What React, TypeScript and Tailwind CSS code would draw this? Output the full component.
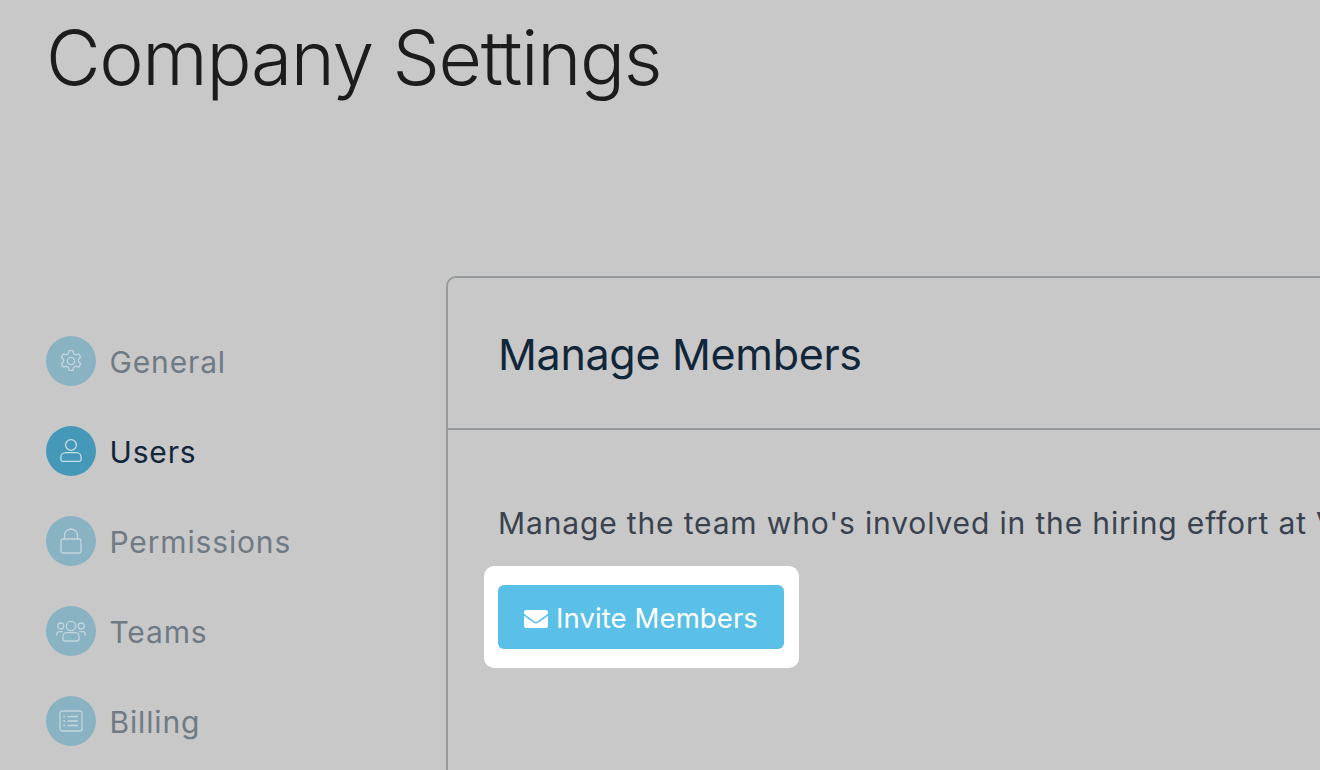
import { FaEnvelope } from "react-icons/fa";

const font = { fontFamily: "Inter, 'Liberation Sans', sans-serif" };

function GearIcon() {
  return (
    <svg width="24" height="24" viewBox="0 0 24 24" fill="none" stroke="currentColor" strokeWidth="1.3" strokeLinejoin="round">
      <path d="M10 1.6h4l.6 3 2.2 1.2 2.9-1 2 3.4-2.3 2v2.6l2.3 2-2 3.4-2.9-1-2.2 1.2-.6 3h-4l-.6-3-2.2-1.2-2.9 1-2-3.4 2.3-2v-2.6l-2.3-2 2-3.4 2.9 1 2.2-1.2z" />
      <circle cx="12" cy="12" r="3.6" />
    </svg>
  );
}

function UserIcon() {
  return (
    <svg width="24" height="26" viewBox="0 0 24 26" fill="none" stroke="currentColor" strokeWidth="1.3">
      <circle cx="12" cy="7" r="5.4" />
      <path d="M6.5 14.6h11a4.6 4.6 0 0 1 4.6 4.6v2.4c0 1-.8 1.8-1.8 1.8H3.7c-1 0-1.8-.8-1.8-1.8v-2.4a4.6 4.6 0 0 1 4.6-4.6z" />
    </svg>
  );
}

function LockIcon() {
  return (
    <svg width="22" height="26" viewBox="0 0 22 26" fill="none" stroke="currentColor" strokeWidth="1.3">
      <rect x="1" y="11" width="20" height="14" rx="2" />
      <path d="M4.5 11V7.5a6.5 6.5 0 0 1 13 0V11" />
    </svg>
  );
}

function TeamIcon() {
  return (
    <svg width="30" height="22" viewBox="0 0 30 22" fill="none" stroke="currentColor" strokeWidth="1.3">
      <circle cx="15" cy="6" r="4.6" />
      <circle cx="4.8" cy="6" r="3" />
      <circle cx="25.2" cy="6" r="3" />
      <path d="M10.6 12.6h8.8a3.6 3.6 0 0 1 3.6 3.6v2.6c0 1.2-1 2.2-2.2 2.2H9.2c-1.2 0-2.2-1-2.2-2.2v-2.6a3.6 3.6 0 0 1 3.6-3.6z" />
      <path d="M.8 15.5v-1a2.8 2.8 0 0 1 2.8-2.8h3.2M29.2 15.5v-1a2.8 2.8 0 0 0-2.8-2.8h-3.2" />
    </svg>
  );
}

function ListIcon() {
  return (
    <svg width="24" height="22" viewBox="0 0 24 22" fill="none" stroke="currentColor" strokeWidth="1.3">
      <rect x="1" y="1" width="22" height="20" rx="2" />
      <path d="M8.5 6.5h10.5M8.5 11h10.5M8.5 15.5h10.5" />
      <circle cx="5.2" cy="6.5" r="1" fill="currentColor" stroke="none" />
      <circle cx="5.2" cy="11" r="1" fill="currentColor" stroke="none" />
      <circle cx="5.2" cy="15.5" r="1" fill="currentColor" stroke="none" />
    </svg>
  );
}

const navItems = [
  { label: "General", icon: <GearIcon /> },
  { label: "Users", icon: <UserIcon />, active: true },
  { label: "Permissions", icon: <LockIcon /> },
  { label: "Teams", icon: <TeamIcon /> },
  { label: "Billing", icon: <ListIcon /> },
];

export default function App() {
  return (
    <div className="flex h-[770px] w-[1320px] flex-col overflow-hidden bg-[#c8c8c8] pl-[46px]" style={font}>
      <h1 className="pt-[13px] text-[75px] font-[350] leading-[90px] tracking-[-1.35px] text-[#1c1c1c]">
        Company Settings
      </h1>

      <div className="mt-[173px] flex flex-1">
        <nav className="flex w-[400px] shrink-0 flex-col gap-[40px] pt-[60px]">
          {navItems.map((item) => (
            <a key={item.label} className="flex items-center gap-[13.5px]">
              <span
                className={
                  item.active
                    ? "flex h-[50px] w-[50px] items-center justify-center rounded-full bg-[#4698b9] text-[#c5dde6]"
                    : "flex h-[50px] w-[50px] items-center justify-center rounded-full bg-[#89b2c3] text-[#c3d6de]"
                }
              >
                {item.icon}
              </span>
              <span
                className={
                  item.active
                    ? "pt-[2px] text-[30px] tracking-[0.85px] text-[#12263a]"
                    : "pt-[2px] text-[30px] tracking-[0.85px] text-[#707a84]"
                }
              >
                {item.label}
              </span>
            </a>
          ))}
        </nav>

        <section className="w-[1000px] shrink-0 rounded-tl-[10px] border-l-2 border-t-2 border-[#969a9c]">
          <div className="flex h-[152px] items-center border-b-2 border-[#969a9c] pl-[50px]">
            <h2 className="pt-[2px] text-[43px] font-normal tracking-[-0.3px] text-[#12263a]">Manage Members</h2>
          </div>
          <div className="pl-[50px] pt-[71px]">
            <p className="whitespace-nowrap text-[30px] leading-[44px] tracking-[0.85px] text-[#39424e]">
              Manage the team who's involved in the hiring effort at Vertical
            </p>
            <div className="-ml-[14px] mt-[21px] inline-flex rounded-[10px] bg-white py-[19px] pl-[14px] pr-[15px]">
              <button className="flex h-[64px] w-[286px] items-center justify-center gap-[8px] rounded-[6px] bg-[#5bc0e8] pt-[3px] text-[27.5px] tracking-[0.1px] text-white">
                <FaEnvelope size={24} />
                Invite Members
              </button>
            </div>
          </div>
        </section>
      </div>
    </div>
  );
}
